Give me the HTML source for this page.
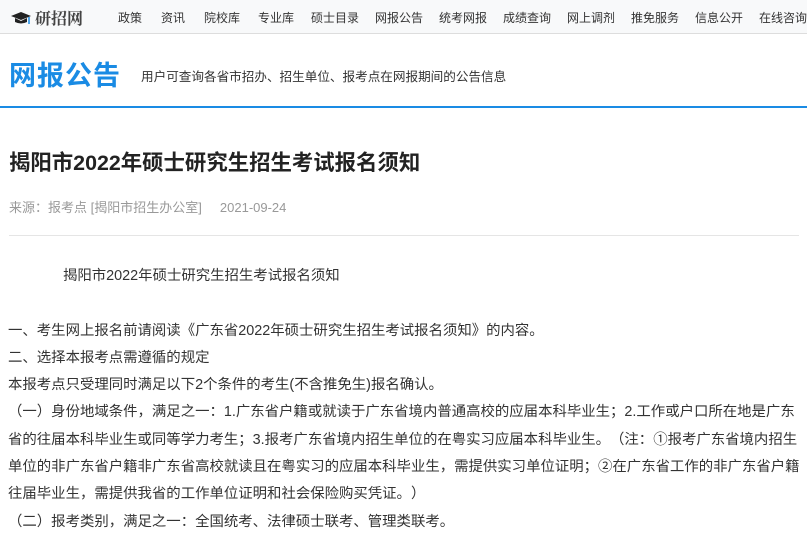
<!DOCTYPE html>
<html><head><meta charset="utf-8"><style>
*{margin:0;padding:0;box-sizing:border-box}
body{width:807px;height:527px;overflow:hidden;background:#fff;font-family:"Liberation Sans","Noto Sans CJK SC",sans-serif;color:#333;text-spacing-trim:space-all}
.top{height:34px;background:#f8f9fa;border-bottom:1px solid #ddd;position:relative}
.logo{position:absolute;left:10px;top:6px;display:flex;align-items:center;font-family:"Noto Serif CJK SC",serif;font-weight:bold;font-size:16px;color:#444}
.logo svg{margin-right:3px}
.nav{position:absolute;top:9px;font-size:12px;color:#333;white-space:nowrap}
.nav span{position:absolute}
.banner{height:74px;border-bottom:2px solid #1a8be4;position:relative}
.banner h1{position:absolute;left:9px;top:20px;font-size:27px;color:#1a8be4;font-weight:bold;letter-spacing:1px}
.banner p{position:absolute;left:141px;top:32px;font-size:12.6px;color:#333}
.title{position:absolute;left:9px;top:146px;font-size:21.4px;font-weight:bold;color:#222}
.meta{position:absolute;left:9px;top:197px;font-size:13px;color:#999}
.hr{position:absolute;left:9px;right:8px;top:235px;border-top:1px solid #e5e5e5}
.body{position:absolute;left:8px;top:263px;font-size:14.4px;line-height:27.3px;color:#333;white-space:nowrap}
</style></head><body>
<div class="top">
<div class="logo"><svg width="22" height="16" viewBox="0 0 22 16"><path d="M1 6 L11 2 L21 6 L11 10 Z" fill="#222"/><path d="M5 8 L5 12 Q11 15 17 12 L17 8 L11 11 Z" fill="#222"/><path d="M19 7 L19 14" stroke="#1a8be4" stroke-width="1.5"/></svg>研招网</div>
<div class="nav">
<span style="left:118px">政策</span><span style="left:161px">资讯</span><span style="left:204px">院校库</span><span style="left:258px">专业库</span><span style="left:311px">硕士目录</span><span style="left:375px">网报公告</span><span style="left:439px">统考网报</span><span style="left:503px">成绩查询</span><span style="left:567px">网上调剂</span><span style="left:631px">推免服务</span><span style="left:695px">信息公开</span><span style="left:759px">在线咨询</span>
</div></div>
<div class="banner"><h1>网报公告</h1><p>用户可查询各省市招办、招生单位、报考点在网报期间的公告信息</p></div>
<div class="title">揭阳市2022年硕士研究生招生考试报名须知</div>
<div class="meta">来源：报考点 [揭阳市招生办公室] &nbsp;&nbsp;&nbsp; 2021-09-24</div>
<div class="hr"></div>
<div class="body">
<span style="padding-left:55px">揭阳市2022年硕士研究生招生考试报名须知</span><br>
<br>
一、考生网上报名前请阅读《广东省2022年硕士研究生招生考试报名须知》的内容。<br>
二、选择本报考点需遵循的规定<br>
本报考点只受理同时满足以下2个条件的考生(不含推免生)报名确认。<br>
（一）身份地域条件，满足之一：1.广东省户籍或就读于广东省境内普通高校的应届本科毕业生；2.工作或户口所在地是广东<br>
省的往届本科毕业生或同等学力考生；3.报考广东省境内招生单位的在粤实习应届本科毕业生。（注：①报考广东省境内招生<br>
单位的非广东省户籍非广东省高校就读且在粤实习的应届本科毕业生，需提供实习单位证明；②在广东省工作的非广东省户籍<br>
往届毕业生，需提供我省的工作单位证明和社会保险购买凭证。）<br>
（二）报考类别，满足之一：全国统考、法律硕士联考、管理类联考。
</div>
</body></html>
